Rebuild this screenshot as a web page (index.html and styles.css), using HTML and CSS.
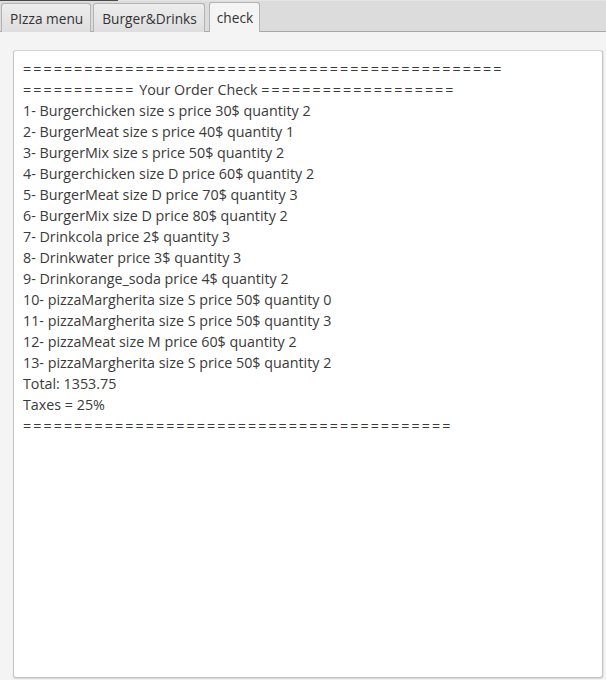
FILE: index.html
```html
<!DOCTYPE html>
<html>
<head>
<meta charset="utf-8">
<link rel="stylesheet" href="styles.css">
</head>
<body>
<div class="window">
  <div class="tabbar">
    <div class="tab">PIzza menu</div>
    <div class="tab">Burger&amp;Drinks</div>
    <div class="tab selected">check</div>
  </div>
  <div class="content">
    <div class="textarea">
      <div class="line"><span class="eq">===============================================</span></div>
      <div class="line"><span class="eq">===========</span> Your Order Check <span class="eq">===================</span></div>
      <div class="line">1- Burgerchicken size s price 30$ quantity 2</div>
      <div class="line">2- BurgerMeat size s price 40$ quantity 1</div>
      <div class="line">3- BurgerMix size s price 50$ quantity 2</div>
      <div class="line">4- Burgerchicken size D price 60$ quantity 2</div>
      <div class="line">5- BurgerMeat size D price 70$ quantity 3</div>
      <div class="line">6- BurgerMix size D price 80$ quantity 2</div>
      <div class="line">7- Drinkcola price 2$ quantity 3</div>
      <div class="line">8- Drinkwater price 3$ quantity 3</div>
      <div class="line">9- Drinkorange_soda price 4$ quantity 2</div>
      <div class="line">10- pizzaMargherita size S price 50$ quantity 0</div>
      <div class="line">11- pizzaMargherita size S price 50$ quantity 3</div>
      <div class="line">12- pizzaMeat size M price 60$ quantity 2</div>
      <div class="line">13- pizzaMargherita size S price 50$ quantity 2</div>
      <div class="line">Total: 1353.75</div>
      <div class="line">Taxes = 25%</div>
      <div class="line"><span class="eq">==========================================</span></div>
    </div>
  </div>
</div>
</body>
</html>
```
FILE: styles.css
```css
html, body {
  margin: 0;
  padding: 0;
  width: 606px;
  height: 680px;
  overflow: hidden;
  background: #f4f4f4;
}
.window {
  display: flex;
  flex-direction: column;
  height: 680px;
  font-family: "Open Sans", "Noto Sans", sans-serif;
}
.tabbar {
  display: flex;
  align-items: flex-end;
  gap: 2px;
  height: 32px;
  box-sizing: border-box;
  padding-left: 1px;
  background:
    linear-gradient(to right, #4a4a4a 118px, #e4e4e4 118px) top left / 100% 1px no-repeat,
    #dcdcdc;
  border-bottom: 1px solid #a8a8a8;
}
.tab {
  height: 29px;
  box-sizing: border-box;
  padding: 0 7px 0 8px;
  display: flex;
  align-items: center;
  font-size: 13.7px;
  color: #333333;
  background: linear-gradient(#ededed, #dedede);
  border: 1px solid #b3b3b3;
  border-bottom: none;
  border-radius: 3px 3px 0 0;
  margin-bottom: -1px;
}
.tab.selected {
  background: #f4f4f4;
  height: 30px;
  margin-left: 2px;
  padding: 0 6px 0 7px;
}
.content {
  flex: 1;
  padding: 18px 3px 2px 13px;
  display: flex;
}
.textarea {
  flex: 1;
  background: #ffffff;
  border: 1px solid #c6c6c6;
  border-top-color: #d6d6d6;
  border-radius: 3px;
  box-shadow: 0 1px 1px rgba(0,0,0,0.12), 1px 0 1px rgba(0,0,0,0.06);
  padding: 7px 9px;
  font-size: 14.3px;
  line-height: 21px;
  color: #3a3a3a;
}
.line {
  white-space: pre;
}
.eq {
  letter-spacing: 2.05px;
}
```
